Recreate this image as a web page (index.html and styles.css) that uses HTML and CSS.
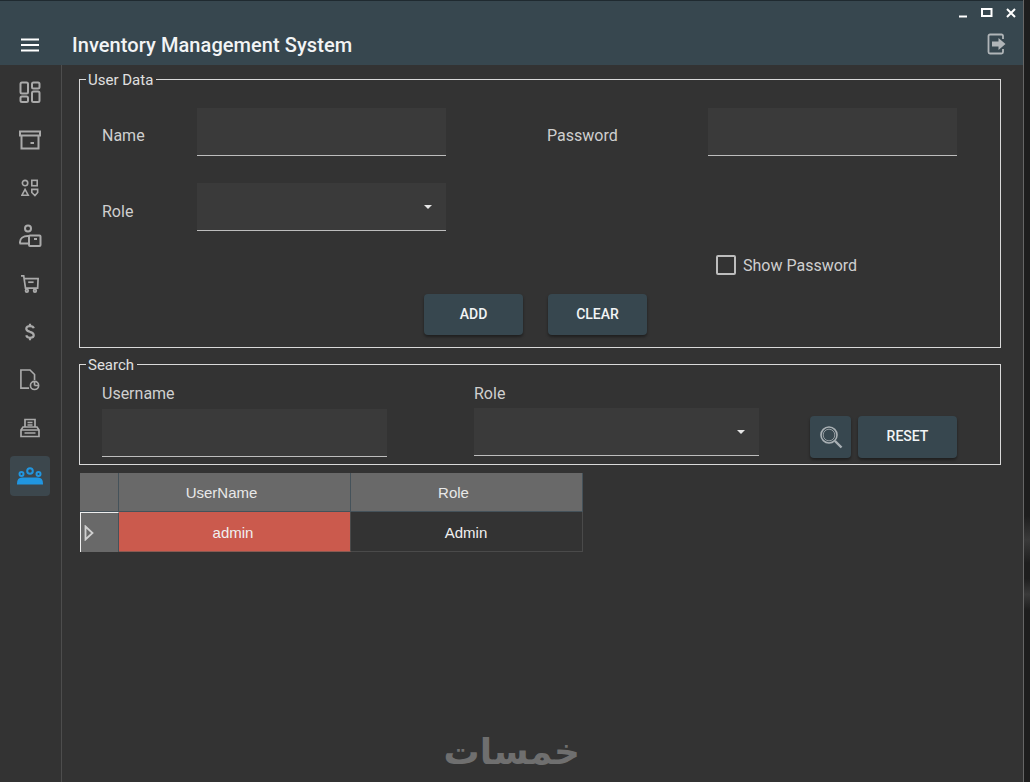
FILE: index.html
```html
<!DOCTYPE html>
<html lang="en">
<head>
<meta charset="utf-8">
<title>Inventory Management System</title>
<link rel="stylesheet" href="styles.css">
</head>
<body>
<div class="window">
<header class="topbar">
  <div class="winctl">
    <svg width="10" height="10" viewBox="0 0 10 10"><path d="M1 8.500H9" stroke="#fff" stroke-width="2"/></svg>
    <svg width="12" height="10" viewBox="0 0 12 10"><rect x="1" y="1" width="9.500" height="7" fill="none" stroke="#fff" stroke-width="2"/></svg>
    <svg width="10" height="10" viewBox="0 0 10 10"><path d="M1 1L9 9M9 1L1 9" stroke="#fff" stroke-width="2"/></svg>
  </div>
  <div class="titlerow">
    <svg class="burger" width="18" height="14" viewBox="0 0 18 14"><path d="M0 1.500H18M0 7H18M0 12.500H18" stroke="#fff" stroke-width="2"/></svg>
    <h1 class="title">Inventory Management System</h1>
    <svg class="logout" width="20" height="22" viewBox="0 0 20 22"><path d="M16 6V3a1.500 1.500 0 0 0-1.500-1.500H3A1.500 1.500 0 0 0 1.500 3V19A1.500 1.500 0 0 0 3 20.500H14.500A1.500 1.500 0 0 0 16 19V16" fill="none" stroke="#b0b5b8" stroke-width="1.800"/><path d="M5 8.500H11.500V5L18.500 11L11.500 17V13.500H5Z" fill="#b0b5b8"/></svg>
  </div>
</header>
<div class="shell">
  <nav class="side">
    <a class="navitem"><svg width="22" height="22" viewBox="0 0 22 22" fill="none" stroke="#aaa" stroke-width="2"><rect x="1.500" y="1.500" width="7.500" height="11" rx="1.500"/><rect x="13" y="1.500" width="7.500" height="6" rx="1.500"/><rect x="1.500" y="15.500" width="7.500" height="5.500" rx="1.500"/><rect x="13" y="10.500" width="7.500" height="10.500" rx="1.500"/></svg></a>
    <a class="navitem"><svg width="22" height="20" viewBox="0 0 22 20" fill="none" stroke="#aaa" stroke-width="2"><path d="M1 1.500H21V5.500H1Z"/><path d="M2.500 5.500V18.500H19.500V5.500"/><path d="M11.500 13H15"/></svg></a>
    <a class="navitem"><svg width="18" height="18" viewBox="0 0 20 20" fill="none" stroke="#aaa" stroke-width="1.800"><circle cx="4.500" cy="4.500" r="3"/><rect x="12" y="1.500" width="6" height="6"/><path d="M4.500 11.500L8 18H1Z"/><path d="M12 11.500H18.500V15L15.500 18.500L12 15Z"/></svg></a>
    <a class="navitem"><svg width="24" height="24" viewBox="0 0 24 24" fill="none" stroke="#aaa" stroke-width="2"><circle cx="10" cy="4.500" r="3"/><path d="M2 19.500V18C2 14.500 5 12 10 12H11"/><path d="M1.500 19.500H10"/><rect x="11" y="11.500" width="11.500" height="10.500" rx="1"/><path d="M16 15H19"/></svg></a>
    <a class="navitem"><svg width="18" height="18" viewBox="0 0 20 20" fill="none" stroke="#aaa" stroke-width="1.900"><path d="M0 1H3L5 14.500H18.500L19 4H3.500"/><path d="M8 8H14"/><circle cx="6.500" cy="17.500" r="1.500"/><circle cx="15.500" cy="17.500" r="1.500"/></svg></a>
    <a class="navitem"><svg width="10" height="18" viewBox="0 0 12 20" fill="none" stroke="#aaa" stroke-width="2.600"><path d="M10.500 5.500C10 3.500 8 3 6 3C3.500 3 1.500 4 1.500 6C1.500 8 3.500 9 6 9.800C8.500 10.500 10.500 11.500 10.500 14C10.500 16 8.500 17 6 17C3.500 17 2 16 1.500 14"/><path d="M6 0V3M6 17V20"/></svg></a>
    <a class="navitem"><svg width="20" height="22" viewBox="0 0 22 24" fill="none" stroke="#aaa" stroke-width="1.800"><path d="M10 21H1V1H11L16 6V12"/><circle cx="16" cy="18" r="4.500"/><path d="M16 18V14M16 18H20"/></svg></a>
    <a class="navitem"><svg width="20" height="20" viewBox="0 0 20 20" fill="none" stroke="#aaa" stroke-width="1.700"><path d="M5 9V1.500H15V9"/><path d="M7.500 4.500H12.500M7.500 7H12.500"/><path d="M1 12L3 9H17L19 12V18.500H1Z"/><path d="M1 12H19M4.500 15H15.500"/></svg></a>
    <a class="navitem active"><svg width="26" height="18" viewBox="0 0 26 18" fill="none" stroke="#2196e0" stroke-width="2"><circle cx="13" cy="4" r="2.800"/><circle cx="4.500" cy="7" r="2"/><circle cx="21.500" cy="7" r="2"/><path d="M1 16.500C1 13 3 11.500 5 11.500H21C23 11.500 25 13 25 16.500Z" fill="#2196e0"/></svg></a>
  </nav>
  <main class="content">
    <fieldset class="group group-user">
      <legend class="legend">User Data</legend>
      <div class="formgrid">
        <label class="flabel">Name</label>
        <div class="field"></div>
        <label class="flabel pw">Password</label>
        <div class="field pwfield"></div>
        <label class="flabel rolelabel">Role</label>
        <div class="field select"><span class="caret"></span></div>
      </div>
      <div class="checkrow"><span class="check"></span><span class="checktext">Show Password</span></div>
      <div class="btnrow"><button class="btn">ADD</button><button class="btn">CLEAR</button></div>
    </fieldset>
    <fieldset class="group group-search">
      <legend class="legend">Search</legend>
      <div class="searchrow">
        <div class="scol"><div class="slabel">Username</div><div class="field wide"></div></div>
        <div class="scol rolecol"><div class="slabel">Role</div><div class="field wide select up"><span class="caret"></span></div></div>
        <button class="btn iconbtn"><svg width="24" height="24" viewBox="0 0 24 24" fill="none" stroke="#a9b0b4"><circle cx="10" cy="10" r="8" stroke-width="1.600"/><circle cx="10" cy="10" r="5.800" stroke-width="0.800"/><path d="M16 16L22.500 22.500" stroke-width="2.400"/></svg></button>
        <button class="btn resetbtn">RESET</button>
      </div>
    </fieldset>
    <table class="grid">
      <thead><tr><th class="rh"></th><th>UserName</th><th>Role</th></tr></thead>
      <tbody><tr>
        <td class="rh sel"><svg width="10" height="16" viewBox="0 0 10 16"><path d="M1.500 1.500L8.500 8L1.500 14.500Z" fill="none" stroke="#d0d0d0" stroke-width="1.800"/></svg></td>
        <td class="cell hot">admin</td><td class="cell">Admin</td>
      </tr></tbody>
    </table>
    <div class="mark" lang="ar" dir="rtl">خمسات</div>
  </main>
</div>
</div>
</body>
</html>
```

FILE: styles.css
```css
* { box-sizing: border-box; }
html, body { margin: 0; height: 100%; }
body {
  width: 1030px; height: 782px; overflow: hidden;
  background: linear-gradient(to bottom, #1e1e1e 0, #1e1e1e 66%, #3a3a3a 69%, #1e1e1e 72%, #1e1e1e 74%, #3a3a3a 76%, #1e1e1e 78%, #1e1e1e 100%);
  color: #d4d4d4;
  font-family: Roboto, sans-serif; font-size: 16px;
}
.window { width: 1024px; height: 782px; background: #333333; display: flex; flex-direction: column; border-right: 1px solid #666; }
.topbar { height: 65px; flex: none; background: #37474f; border-top: 1px solid #1f2a30; display: flex; flex-direction: column; }
.winctl { height: 24px; flex: none; display: flex; justify-content: flex-end; align-items: center; gap: 13px; padding: 0 7px 0 0; }
.winctl svg { display: block; }
.titlerow { flex: 1; display: flex; align-items: center; padding: 0 16px 0 21px; }
.burger { flex: none; }
.title { margin: 0 0 0 33px; font-size: 20px; letter-spacing: .07px; font-weight: 500; color: #f2f4f5; flex: 1; line-height: 24px; }
.logout { margin-bottom: 2px; }
.shell { flex: 1; display: flex; min-height: 0; }
.side { width: 62px; flex: none; border-right: 1px solid #4d4d4d; padding: 7px 0 0 10px; display: flex; flex-direction: column; gap: 8px; }
.navitem { width: 40px; height: 40px; display: flex; align-items: center; justify-content: center; border-radius: 4px; }
.navitem.active { background: #3c474d; }
.content { flex: 1; padding: 4px 0 0 17px; position: relative; }
.group { margin: 0; padding: 0; width: 922px; border: 1px solid #d9d9d9; min-width: 0; }
.group-user { height: 279px; }
.group-search { height: 111px; margin-top: 6px; }
.legend { margin-left: 6px; padding: 2px 3px 1px 2px; font-size: 15px; line-height: 18px; color: #e0e0e0; }
.formgrid { display: grid; grid-template-columns: 95px 249px 101px 161px 249px; grid-auto-rows: 48px; row-gap: 27px; padding: 18px 0 0 22px; }
.flabel { align-self: center; margin-top: 8px; color: #cfcfcf; line-height: 20px; }
.pw { grid-column: 4; }
.pwfield { grid-column: 5; }
.rolelabel { grid-column: 1; margin-top: 10px; }
.field { background: #3a3a3a; border-bottom: 1px solid #bdbdbd; position: relative; height: 48px; }
.select .caret { position: absolute; right: 14px; top: 22px; width: 0; height: 0; border-left: 4px solid transparent; border-right: 4px solid transparent; border-top: 4px solid #e6e6e6; }
.checkrow { display: flex; align-items: center; margin: 24px 0 0 636px; height: 20px; }
.check { width: 20px; height: 20px; border: 2px solid #bdbdbd; border-radius: 2px; flex: none; }
.checktext { margin-left: 7px; padding-top: 2px; color: #cfcfcf; line-height: 20px; }
.btnrow { display: flex; gap: 25px; padding-left: 344px; margin-top: 19px; }
.btn { width: 99px; height: 41px; border: 0; border-radius: 4px; background: #37474f; color: #f2f4f5; font: 500 14px Roboto, sans-serif; box-shadow: 0 2px 3px rgba(0,0,0,.4); padding: 0 0 1px; }
.searchrow { display: flex; align-items: flex-start; padding: 9px 0 0 22px; }
.scol { width: 285px; flex: none; }
.rolecol { margin-left: 87px; }
.slabel { line-height: 20px; height: 20px; margin-bottom: 5px; color: #cfcfcf; }
.field.wide { width: 285px; }
.field.up { margin-top: -1px; }
.iconbtn { width: 41px; height: 42px; margin: 32px 0 0 51px; display: flex; align-items: center; justify-content: center; }
.resetbtn { height: 42px; margin: 32px 0 0 7px; padding-bottom: 2px; }
.grid { border-collapse: separate; border-spacing: 0; table-layout: fixed; width: 503px; margin: 8px 0 0 1px; font-family: "Liberation Sans", Arial, sans-serif; font-size: 15px; }
.grid th { background: #696969; height: 39px; font-weight: 400; color: #e8e8e8; border-right: 1px solid #45525a; border-bottom: 1px solid #45525a; padding: 1px 26px 0 0; }
.grid th:first-child, .grid td:first-child { width: 39px; padding: 0; }
.cell { height: 40px; text-align: center; color: #f0f0f0; border-right: 1px solid #4a4a4a; border-bottom: 1px solid #4a4a4a; background: #333; padding: 2px 1px 0 0; }
.hot { background: #cb5a4d; border-bottom-color: #8a5a52; padding-right: 3px; }
.rh.sel { background: #696969; border-top: 1px solid #eee; border-left: 1px solid #eee; border-right: 1px solid #45525a; }
.rh.sel svg { display: block; margin: 1px 0 0 3px; }
.mark { position: absolute; left: 393px; top: 665px; width: 125px; text-align: center; font-family: "DejaVu Sans", sans-serif; font-weight: 700; font-size: 36px; line-height: 44px; color: #6f6f6f; }
```
